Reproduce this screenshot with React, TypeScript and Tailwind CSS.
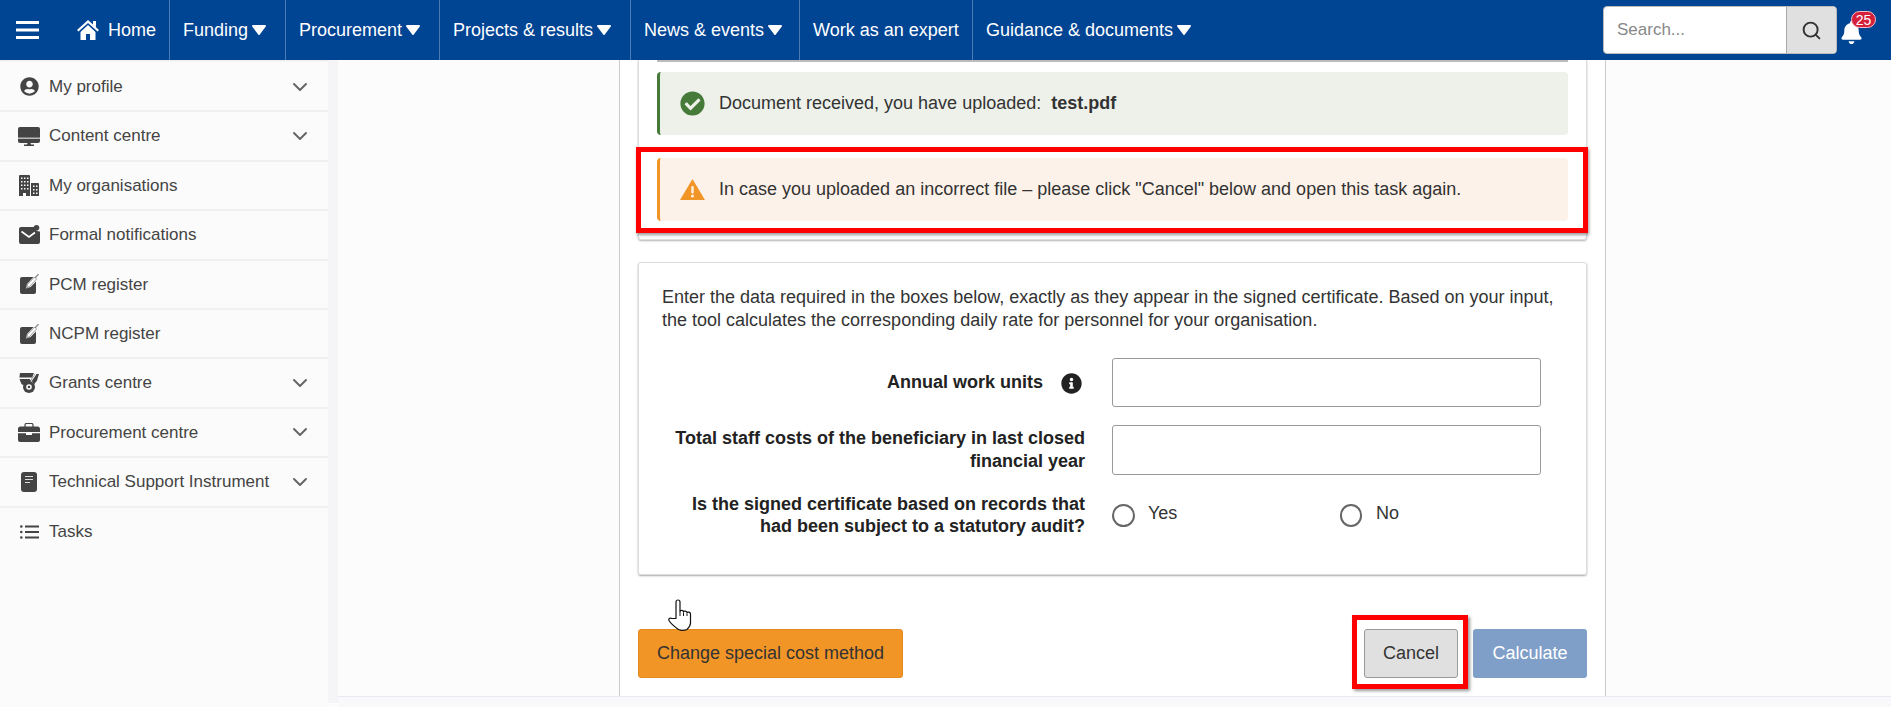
import React from "react";
import { ChevronDown, Search } from "lucide-react";
import { FaBell, FaCheckCircle, FaInfoCircle, FaUserCircle } from "react-icons/fa";

const C = "#444";

function IconBars() {
  return (
    <svg width="23" height="18" viewBox="0 0 23 18" className="ml-[16px] shrink-0">
      <rect y="0" width="23" height="3" fill="#fff" />
      <rect y="7.500" width="23" height="3" fill="#fff" />
      <rect y="15" width="23" height="3" fill="#fff" />
    </svg>
  );
}
function IconHome() {
  return (
    <svg width="22" height="20" viewBox="0 0 22 20" className="ml-[38px] shrink-0">
      <path d="M11 0L22 10l-1.500 1.500L11 3 1.500 11.500 0 10z" fill="#fff" />
      <path d="M16 1h3v6.500L16 4.500z" fill="#fff" />
      <path d="M3.500 12L11 5l7.500 7v8H13v-6H9v6H3.500z" fill="#fff" />
    </svg>
  );
}
function Caret() {
  return (
    <svg width="14" height="10" viewBox="0 0 14 10" className="ml-[4px] shrink-0">
      <path d="M1 0h12a1 1 0 0 1 .8 1.600L7.800 9.400a1 1 0 0 1-1.600 0L.2 1.600A1 1 0 0 1 1 0z" fill="#fff" />
    </svg>
  );
}
function IconDesktop() {
  return (
    <svg width="22" height="19" viewBox="0 0 22 19">
      <path d="M2 0h18a2 2 0 0 1 2 2v12a2 2 0 0 1-2 2H2a2 2 0 0 1-2-2V2a2 2 0 0 1 2-2z" fill={C} />
      <rect x="0" y="10.500" width="22" height="1.500" fill="#bbb" />
      <path d="M9.500 16h3l.5 1.500h3V19H6v-1.500h3z" fill={C} />
    </svg>
  );
}
function IconBuilding() {
  return (
    <svg width="20" height="21" viewBox="0 0 20 21">
      <path d="M0 1A1 1 0 0 1 1 0h9a1 1 0 0 1 1 1v20H7v-3H4v3H0z" fill={C} />
      <path d="M12 8h7a1 1 0 0 1 1 1v12h-8z" fill={C} />
      <path d="M2 2.500h1.500v1.500H2zM5 2.500h1.500v1.500H5zM8 2.500h1.500v1.500H8zM2 6h1.500v1.500H2zM5 6h1.500v1.500H5zM8 6h1.500v1.500H8zM2 9.500h1.500v1.500H2zM5 9.500h1.500v1.500H5zM8 9.500h1.500v1.500H8zM2 13h1.500v1.500H2zM5 13h1.500v1.500H5zM8 13h1.500v1.500H8z" fill="#fbfbfb" />
      <path d="M14 10.500h1.500V12H14zM17 10.500h1.500V12H17zM14 14h1.500v1.500H14zM17 14h1.500v1.500H17zM14 17.500h1.500V19H14zM17 17.500h1.500V19H17z" fill="#fbfbfb" />
    </svg>
  );
}
function IconMail() {
  return (
    <svg width="21" height="19" viewBox="0 0 21 19">
      <path d="M2 2h13.500a5 5 0 0 0 5.500 4.500V17a2 2 0 0 1-2 2H2a2 2 0 0 1-2-2V4a2 2 0 0 1 2-2z" fill={C} />
      <circle cx="17.500" cy="2.800" r="2.800" fill={C} />
      <path d="M2.500 6.500l7.500 5.500 6-4.500" fill="none" stroke="#fff" strokeWidth="1.700" />
    </svg>
  );
}
function IconPen() {
  return (
    <svg width="19" height="20" viewBox="0 0 19 20">
      <path d="M2 3h11.500L7 10l-1 4.500 4.500-1.500L16 7.500V18a2 2 0 0 1-2 2H2a2 2 0 0 1-2-2V5a2 2 0 0 1 2-2z" fill={C} />
      <path d="M15 4L18.500 0" stroke="#888" strokeWidth="1.200" fill="none" />
      <path d="M6.800 13.700l.8-3.300 7-7.400 2 2-7 7.400z" fill="#fff" stroke={C} strokeWidth=".5" />
    </svg>
  );
}
function IconMedal() {
  return (
    <svg width="20" height="20" viewBox="0 0 20 20">
      <path d="M1 0h14l-2 4.500H0.400z" fill={C} />
      <path d="M0.500 6h10L12 7.500l-1.500 2.500A5.500 5.500 0 0 0 6 12.500L3 11.500A4 4 0 0 1 2 10z" fill={C} />
      <path d="M12 6.500L16 1h4l-2 6.500-3 4z" fill={C} />
      <path d="M12.500 7.500L17 1" stroke="#fff" strokeWidth="1.100" />
      <circle cx="10" cy="14" r="6" fill={C} />
      <circle cx="10" cy="14" r="2.800" fill="#fff" />
      <circle cx="10" cy="14" r="1.300" fill={C} />
    </svg>
  );
}
function IconCase() {
  return (
    <svg width="22" height="19" viewBox="0 0 22 19">
      <path d="M7 4V2a1.500 1.500 0 0 1 1.500-1.500h5A1.500 1.500 0 0 1 15 2v2" fill="none" stroke={C} strokeWidth="1.200" />
      <path d="M2.500 3.500h17A2.500 2.500 0 0 1 22 6v3H0V6a2.500 2.500 0 0 1 2.500-2.500z" fill={C} />
      <path d="M0 10.200h8V12h6v-1.800h8V17a2 2 0 0 1-2 2H2a2 2 0 0 1-2-2z" fill={C} />
    </svg>
  );
}
function IconDoc() {
  return (
    <svg width="16" height="20" viewBox="0 0 16 20">
      <rect width="16" height="20" rx="3" fill={C} />
      <path d="M4 4.500h8M4 7.500h8M4 10.500h5" stroke="#ddd" strokeWidth="1.200" />
    </svg>
  );
}
function IconList() {
  return (
    <svg width="19" height="14" viewBox="0 0 19 14">
      <circle cx="1.300" cy="1.500" r="1.300" fill={C} />
      <circle cx="1.300" cy="7" r="1.300" fill={C} />
      <circle cx="1.300" cy="12.500" r="1.300" fill={C} />
      <path d="M5 1.500h14M5 7h14M5 12.500h14" stroke={C} strokeWidth="2" />
    </svg>
  );
}
function IconWarn() {
  return (
    <svg width="25" height="21" viewBox="0 0 25 21" className="shrink-0">
      <path d="M12.500 0L25 21H0z" fill="#f29527" />
      <rect x="11.300" y="7" width="2.400" height="7.500" rx="1" fill="#fdf2e9" />
      <circle cx="12.500" cy="17" r="1.500" fill="#fdf2e9" />
    </svg>
  );
}
function IconHand() {
  return (
    <svg width="25" height="32" viewBox="0 0 25 32">
      <path
        d="M8 19.500V3a2 2 0 0 1 4 0v9.500c0-1.500 3.500-1.500 3.500 0.500 .2-1.500 3.500-1.200 3.500.8 .5-1.300 3.500-.8 3.500 1.200v9c0 3-1.500 4.500-3.500 6.500-2.500 1-6 1-8.500 0C7 28 3 25 1 21.500c-.8-1.500 1-3 2.500-2.200z"
        fill="#fff"
        stroke="#111"
        strokeWidth="1.200"
        strokeLinejoin="round"
      />
      <path d="M12 12.500V17M15.500 13.500V17M19 14.500V17" stroke="#111" strokeWidth="1" />
    </svg>
  );
}

const navItems = [
  { label: "Funding", w: "w-[116px]", caret: true, sep: true },
  { label: "Procurement", w: "w-[154px]", caret: true, sep: true },
  { label: "Projects & results", w: "w-[191px]", caret: true, sep: true },
  { label: "News & events", w: "w-[169px]", caret: true, sep: true },
  { label: "Work as an expert", w: "w-[173px]", caret: false, sep: true },
  { label: "Guidance & documents", w: "w-[225px]", caret: true, sep: false },
];

const sideItems: { label: string; icon: React.ReactNode; chev: boolean }[] = [
  { label: "My profile", icon: <FaUserCircle size={19} color={C} />, chev: true },
  { label: "Content centre", icon: <IconDesktop />, chev: true },
  { label: "My organisations", icon: <IconBuilding />, chev: false },
  { label: "Formal notifications", icon: <IconMail />, chev: false },
  { label: "PCM register", icon: <IconPen />, chev: false },
  { label: "NCPM register", icon: <IconPen />, chev: false },
  { label: "Grants centre", icon: <IconMedal />, chev: true },
  { label: "Procurement centre", icon: <IconCase />, chev: true },
  { label: "Technical Support Instrument", icon: <IconDoc />, chev: true },
  { label: "Tasks", icon: <IconList />, chev: false },
];

export default function App() {
  return (
    <div className="h-[707px] w-[1891px] overflow-hidden flex flex-col bg-[#fcfcfc] font-['Liberation_Sans',Arial,sans-serif] text-[#333]">
      <header className="h-[60px] shrink-0 flex items-center bg-[#004494] text-white">
        <div className="w-[170px] h-full flex items-center shrink-0 border-r border-[#4d7cb4]">
          <IconBars />
          <IconHome />
          <span className="ml-[9px] text-[18px]">Home</span>
        </div>
        {navItems.map((n) => (
          <div
            key={n.label}
            className={`${n.w} h-full flex items-center pl-[13px] shrink-0 text-[18px] ${n.sep ? "border-r border-[#4d7cb4]" : ""}`}
          >
            <span className="whitespace-nowrap">{n.label}</span>
            {n.caret && <Caret />}
          </div>
        ))}
        <div className="ml-auto flex items-center mr-[15px]">
          <div className="w-[234px] h-[48px] flex rounded-[4px] overflow-hidden border border-[#bbb] bg-white">
            <div className="flex-1 flex items-center pl-[13px] text-[#888] text-[17px]">Search...</div>
            <div className="w-[50px] bg-[#e0e0e0] border-l border-[#aaa] flex items-center justify-center">
              <Search size={21} color="#333" strokeWidth={2.2} />
            </div>
          </div>
          <div className="relative ml-[3px] w-[36px] h-[48px] flex items-center">
            <FaBell size={23} className="mt-[4px]" />
            <span className="absolute left-[11px] top-[5px] w-[25px] h-[17px] rounded-full bg-[#d5203b] text-white text-[14px] leading-[16px] text-center border border-[#f5c0c8]">25</span>
          </div>
        </div>
      </header>

      <div className="flex-1 flex min-h-0">
        <aside className="w-[328px] shrink-0 bg-[#fbfbfb] pt-[3px] shadow-[inset_0_2px_2px_-1px_rgba(0,0,0,0.08)]">
          {sideItems.map((s, i) => (
            <div key={s.label} className={`h-[49.4px] flex items-center ${i < sideItems.length - 1 ? "border-b-2 border-[#f0f0f0]" : ""}`}>
              <div className="w-[49px] shrink-0 flex justify-center pl-[9px]">{s.icon}</div>
              <span className="flex-1 text-[17px] text-[#444] whitespace-nowrap">{s.label}</span>
              {s.chev && <ChevronDown size={24} color="#666" strokeWidth={2} className="mr-[16px]" />}
            </div>
          ))}
        </aside>
        <div className="w-[10px] shrink-0 bg-[#f5f5f7] mb-[4px]" />
        <div className="flex-1 flex flex-col min-w-0">
          <div className="flex-1 flex min-h-0">
            <div className="w-[281px] shrink-0" />
            <main className="w-[987px] shrink-0 bg-white border-x border-[#ccc] pl-[18px] pr-[18px] relative">
              <section className="h-[180px] bg-white border-x border-b border-[#ddd] rounded-b-[3px] px-[18px] shadow-[0_1px_2px_rgba(0,0,0,0.3)] relative">
                <div className="h-[2px] bg-[#bbb] mb-[10px]" />
                <div className="h-[63px] rounded-[4px] bg-[#edf1ea] border-l-[3px] border-[#467a39] flex items-center pl-[20px] text-[18px]">
                  <FaCheckCircle size={25} color="#467a39" className="shrink-0" />
                  <span className="ml-[14px]">Document received, you have uploaded:&nbsp;&nbsp;<b>test.pdf</b></span>
                </div>
                <div className="relative mt-[23px]">
                  <div className="h-[63px] rounded-[4px] bg-[#fdf2e9] border-l-[3px] border-[#f29527] flex items-center pl-[20px] text-[18px]">
                    <IconWarn />
                    <span className="ml-[14px]">In case you uploaded an incorrect file – please click "Cancel" below and open this task again.</span>
                  </div>
                  <div className="absolute left-[-21px] right-[-20px] top-[-11px] bottom-[-12px] border-[5px] border-[#ff0000] shadow-[1px_2px_3px_rgba(0,0,0,0.4)]" />
                </div>
              </section>

              <section className="mt-[22px] h-[313px] border border-[#ddd] rounded-[3px] shadow-[0_1px_2px_rgba(0,0,0,0.35)] pl-[23px] pt-[23px]">
                <p className="w-[905px] text-[18px] leading-[23px]">
                  Enter the data required in the boxes below, exactly as they appear in the signed certificate. Based on your input, the tool calculates the corresponding daily rate for personnel for your organisation.
                </p>
                <div className="mt-[26px] grid grid-cols-[423px_429px] gap-x-[27px] gap-y-[18px] text-[18px] leading-[23px]">
                  <div className="flex items-center justify-end font-bold h-[49px] text-[#222]">
                    <span>Annual work units</span>
                    <FaInfoCircle size={21} color="#222" className="ml-[18px] mr-[3px] mt-[2px] shrink-0" />
                  </div>
                  <div className="h-[49px] border border-[#999] rounded-[3px] bg-white" />
                  <div className="flex items-center text-right font-bold h-[50px] text-[#222]">
                    <span className="w-full">Total staff costs of the beneficiary in last closed financial year</span>
                  </div>
                  <div className="h-[50px] border border-[#999] rounded-[3px] bg-white" />
                  <div className="text-right font-bold leading-[22px] text-[#222]">
                    Is the signed certificate based on records that had been subject to a statutory audit?
                  </div>
                  <div className="flex items-start pt-[11px]">
                    <div className="w-[228px] flex items-center">
                      <span className="w-[23px] h-[23px] rounded-full border-2 border-[#666] bg-white" />
                      <span className="ml-[13px] -mt-[5px]">Yes</span>
                    </div>
                    <div className="flex items-center">
                      <span className="w-[22px] h-[23px] rounded-full border-2 border-[#666] bg-white" />
                      <span className="ml-[14px] -mt-[5px]">No</span>
                    </div>
                  </div>
                </div>
              </section>

              <div className="relative mt-[54px] flex items-start text-[18px]">
                <button className="w-[265px] h-[49px] bg-[#f29527] border border-[#e08a20] rounded-[3px] text-[#333]">Change special cost method</button>
                <div className="absolute left-[30px] top-[-30px]"><IconHand /></div>
                <div className="ml-auto relative w-[94px] h-[49px] mr-[15px]">
                  <button className="w-full h-full bg-[#e0e0e0] border border-[#999] rounded-[3px] text-[#333]">Cancel</button>
                  <div className="absolute left-[-12px] right-[-10px] top-[-14px] bottom-[-11px] border-[5px] border-[#ff0000] shadow-[2px_2px_3px_rgba(0,0,0,0.4)]" />
                </div>
                <button className="w-[114px] h-[49px] bg-[#7f9fc9] rounded-[3px] text-white">Calculate</button>
              </div>
            </main>
            <div className="flex-1" />
          </div>
          <div className="h-[11px] shrink-0 bg-[#f9f9fb] border-t border-[#e6e9f2]" />
        </div>
      </div>
    </div>
  );
}
